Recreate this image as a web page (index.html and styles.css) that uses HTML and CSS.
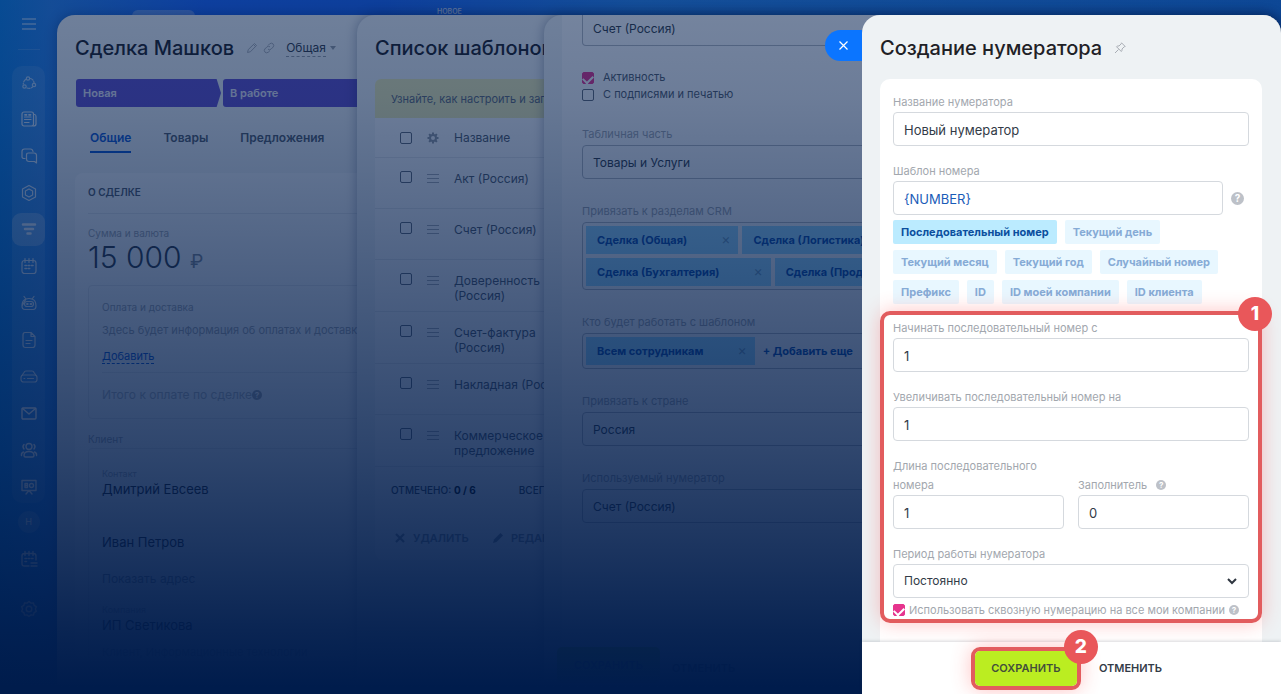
FILE: index.html
```
<!DOCTYPE html>
<html lang="ru">
	<head>
		<meta charset="utf-8">
		<title>Создание нумератора</title>
		<link rel="stylesheet" href="styles.css">
	</head>
	<body>
		<div class="screen">
			<nav class="sidebar">
				<button class="menu_toggle" aria-label="Меню"><svg width="14" height="12" viewBox="0 0 14 12"><path d="M0 1h14M0 6h14M0 11h14"/></svg></button>
				<div class="menu_group">
					<a href="#" class="menu_item dim" aria-label="Совместная работа"><svg viewBox="0 0 18 18"><circle cx="8" cy="4.500" r="1.700"/><circle cx="4.500" cy="12.500" r="1.700"/><circle cx="14" cy="11" r="1.700"/><path d="M5.500 5.500Q3.500 7 3.300 10M10.500 4.500Q13.500 5.500 14 8.500M7 14q3 1.200 5.500-1" stroke-dasharray="3 1.500"/></svg></a>
					<a href="#" class="menu_item" aria-label="Лента"><svg viewBox="0 0 18 18"><rect x="2" y="2" width="11.500" height="14" rx="2"/><path d="M14 4.500h.5q1.500 0 1.500 2V14q0 2-2.500 2M4.500 9.500h6.500M4.500 12.500h4.500M4.500 7h6.500"/><path d="M5 4.800h1.500M9 4.800h1.500" stroke-width="1.800"/></svg></a>
					<a href="#" class="menu_item" aria-label="Чаты"><svg viewBox="0 0 18 18"><path d="M5 11.500H3.200L2 10.300V4.500Q2 2 4.500 2h6q2 0 2.500 2.500"/><path d="M8.500 6h5.500q2.500 0 2.500 2.500v7.500l-2-1.500H9Q6.500 14.500 6.500 12V8Q6.500 6 8.500 6z"/></svg></a>
					<a href="#" class="menu_item" aria-label="Сайты"><svg viewBox="0 0 18 18"><path d="M9 1.500L15.500 5v8L9 16.500 2.500 13V5z"/><path d="M9 5l3.600 2v4L9 13l-3.600-2V7z"/></svg></a>
					<a href="#" class="menu_item active" aria-label="CRM"><svg viewBox="0 0 18 18"><path d="M3 4.500h12M5 9h8M7.500 13.500h3" stroke-width="2.500"/></svg></a>
					<a href="#" class="menu_item" aria-label="Календарь"><svg viewBox="0 0 18 18"><rect x="2" y="3.500" width="14" height="13" rx="2.500"/><path d="M5 1.500v4M9 1.500v4M13 1.500v4"/><path d="M5 8.500h1.500M8.200 8.500h1.500M11.500 8.500H13M5 11.500h1.500M8.200 11.500h1.500" stroke-width="1.600"/></svg></a>
					<a href="#" class="menu_item" aria-label="Роботы"><svg viewBox="0 0 18 18"><path d="M2 12Q2 6 6 5l-2-2.500M12 5l2-2.500M6 5q3-1 6 0 4 1 4 7 0 3.500-3 3.500H5Q2 15.500 2 12z"/><rect x="4.500" y="7.500" width="9" height="5" rx="2.500"/><path d="M7 10h.8M10.500 10h.8" stroke-width="1.800"/></svg></a>
					<a href="#" class="menu_item" aria-label="Документы"><svg viewBox="0 0 18 18"><path d="M5 1.500h6L15 5.500V14q0 2.500-2.500 2.500H5.500Q3 16.500 3 14V4Q3 1.500 5 1.500zM11 2v3.500h3.500M6 9.500h6M6 12.500h4"/></svg></a>
					<a href="#" class="menu_item" aria-label="Диск"><svg viewBox="0 0 18 18"><path d="M1.500 9L4 5.500Q4.500 4 6 4h6q1.500 0 2 1.500L16.500 9"/><rect x="1" y="8" width="16" height="7" rx="2.500"/><path d="M4 11.500h.8M7.500 11.500h6"/></svg></a>
					<a href="#" class="menu_item low" aria-label="Почта"><svg viewBox="0 0 18 18"><rect x="2" y="4" width="14" height="11" rx="1"/><path d="M2.500 4.500L9 10l6.500-5.500"/></svg></a>
					<a href="#" class="menu_item low" aria-label="Сотрудники"><svg viewBox="0 0 18 18"><circle cx="9" cy="5.500" r="3"/><path d="M4 14.500q0-4 5-4t5 4q0 1.500-1.500 1.500h-7Q4 16 4 14.500zM4 3.500Q2 5.500 4 8M14 3.500q2 2 0 4.500M3.500 11Q1 12 1.500 14.500M14.500 11q2.500 1 2 3.500"/></svg></a>
					<a href="#" class="menu_item low" aria-label="Доски"><svg viewBox="0 0 18 18"><path d="M2 2.500h14v10H2zM9 12.500L6 16M9 12.500l3 3.500M5 5.500h2.500v4H5zM5 7.500h2.500"/><circle cx="11.500" cy="7.500" r="2"/></svg></a>
				</div>
				<a href="#" class="menu_avatar">Н</a>
				<a href="#" class="menu_item low" aria-label="Планы"><svg viewBox="0 0 18 18"><path d="M9 16H4.500Q2 16 2 13.500V6q0-2.500 2.500-2.500h9Q16 3.500 16 6v4M5 1.500v4M9 1.500v4M13 1.500v4M11 13h6M11 16h6"/><path d="M5 8.500h1.500M8.200 8.500h1.500M11.500 8.500H13M5 11.500h1.500" stroke-width="1.600"/></svg></a>
				<a href="#" class="menu_item settings low" aria-label="Настройки"><svg viewBox="0 0 18 18"><circle cx="9" cy="9" r="2.800"/><path d="M9 1.500l2 1.600 2.500-.2.600 2.500 2.200 1.300L15.400 9l.9 2.300-2.200 1.300-.6 2.500-2.500-.2-2 1.600-2-1.600-2.500.2-.6-2.500-2.200-1.300L2.600 9l-.9-2.300 2.200-1.300.6-2.500 2.500.2z"/></svg></a>
			</nav>
			<div class="topbar">
				<span class="topbar_tab"></span>
				<span class="topbar_label">НОВОЕ</span>
			</div>

			<section class="slider slider_deal">
				<header class="slider_header">
					<h1>Сделка Машков</h1>
					<svg class="title_icon" viewBox="0 0 12 12"><path d="M1.500 10.500l.8-3L8.500 1.500l2 2L4.500 9.700zM7.500 2.500l2 2"/></svg>
					<svg class="title_icon" viewBox="0 0 12 12"><path d="M5 3.500L6.700 1.800q1.700-1.300 3.300 0 1.400 1.600.2 3.200L8 7.200Q6.500 8.200 5 7.200M7 8.500l-1.700 1.700q-1.700 1.300-3.300 0Q.6 8.600 1.800 7L4 4.800q1.500-1 3 0"/></svg>
					<a href="#" class="funnel">Общая</a>
					<span class="caret"></span>
				</header>
				<div class="stages">
					<div class="stage stage_first">Новая</div>
					<div class="stage">В работе</div>
				</div>
				<nav class="tabs">
					<a href="#" class="tab current">Общие</a>
					<a href="#" class="tab">Товары</a>
					<a href="#" class="tab">Предложения</a>
				</nav>
				<div class="deal_card">
					<h2>О СДЕЛКЕ</h2>
					<p class="caption">Сумма и валюта</p>
					<p class="amount">15 000 <span>₽</span></p>
					<div class="deal_box payment">
						<p class="caption">Оплата и доставка</p>
						<p class="note">Здесь будет информация об оплатах и доставках</p>
						<a href="#" class="add_link">Добавить</a>
						<p class="total">Итого к оплате по сделке<span class="help">?</span></p>
					</div>
					<p class="caption client_caption">Клиент</p>
					<div class="deal_box client">
						<p class="small_caption">Контакт</p>
						<p class="person">Дмитрий Евсеев</p>
						<p class="person second">Иван Петров</p>
						<p class="address">Показать адрес</p>
						<p class="small_caption">Компания</p>
						<p class="person">ИП Светикова</p>
						<p class="note">Клиент, Информационные технологии</p>
					</div>
				</div>
			</section>

			<section class="slider slider_list">
				<header class="slider_header">
					<h1>Список шаблонов</h1>
				</header>
				<div class="list_card">
					<p class="hint">Узнайте, как настроить и заполнить шаблон</p>
					<table class="templates">
						<thead>
							<tr>
								<th class="cell_check"><input type="checkbox" class="check" aria-label="Выбрать все"></th>
								<th class="cell_drag"><svg width="12" height="12" viewBox="0 0 12 12"><circle cx="6" cy="6" r="3" fill="none" stroke="#959ca4" stroke-width="2"/><path d="M6 .5v2M6 9.500v2M.5 6h2M9.500 6h2M2.100 2.100l1.400 1.400M8.500 8.500l1.400 1.400M9.900 2.100L8.500 3.500M3.500 8.500L2.100 9.900" stroke="#959ca4" stroke-width="2"/></svg></th>
								<th>Название</th>
							</tr>
						</thead>
						<tbody>
							<tr><td class="cell_check"><input type="checkbox" class="check" aria-label="Акт"></td><td class="cell_drag"><i class="drag"></i></td><td>Акт (Россия)</td></tr>
							<tr><td class="cell_check"><input type="checkbox" class="check" aria-label="Счет"></td><td class="cell_drag"><i class="drag"></i></td><td>Счет (Россия)</td></tr>
							<tr><td class="cell_check"><input type="checkbox" class="check" aria-label="Доверенность"></td><td class="cell_drag"><i class="drag"></i></td><td>Доверенность<br>(Россия)</td></tr>
							<tr><td class="cell_check"><input type="checkbox" class="check" aria-label="Счет-фактура"></td><td class="cell_drag"><i class="drag"></i></td><td>Счет-фактура<br>(Россия)</td></tr>
							<tr><td class="cell_check"><input type="checkbox" class="check" aria-label="Накладная"></td><td class="cell_drag"><i class="drag"></i></td><td>Накладная (Россия)</td></tr>
							<tr><td class="cell_check"><input type="checkbox" class="check" aria-label="Предложение"></td><td class="cell_drag"><i class="drag"></i></td><td>Коммерческое<br>предложение</td></tr>
						</tbody>
					</table>
					<div class="list_totals">
						<span>ОТМЕЧЕНО: <b>0 / 6</b></span>
						<span>ВСЕГО: <b>6</b></span>
					</div>
					<div class="list_actions">
						<button disabled><svg width="10" height="10" viewBox="0 0 10 10"><path d="M1 1l8 8M9 1L1 9" stroke="#828b95" stroke-width="2.200"/></svg>УДАЛИТЬ</button>
						<button disabled><svg width="10" height="10" viewBox="0 0 10 10"><path d="M0 10l1-3.500L7.500 0 10 2.500 3.500 9z" fill="#828b95"/></svg>РЕДАКТИРОВАТЬ</button>
					</div>
				</div>
			</section>

			<section class="slider slider_template">
				<div class="template_card">
					<input type="text" class="input cut_input" value="Счет (Россия)" aria-label="Название">
					<div class="template_checks">
						<label><input type="checkbox" class="check" checked>Активность</label>
						<label><input type="checkbox" class="check">С подписями и печатью</label>
					</div>
					<label class="template_label" for="products">Табличная часть</label>
					<input type="text" class="input" id="products" value="Товары и Услуги">
					<p class="template_label">Привязать к разделам CRM</p>
					<div class="picker">
						<span class="chip">Сделка (Общая)<button aria-label="Убрать">×</button></span>
						<span class="chip">Сделка (Логистика)<button aria-label="Убрать">×</button></span>
						<span class="chip">Сделка (Бухгалтерия)<button aria-label="Убрать">×</button></span>
						<span class="chip">Сделка (Продажи)<button aria-label="Убрать">×</button></span>
					</div>
					<p class="template_label">Кто будет работать с шаблоном</p>
					<div class="picker">
						<span class="chip">Всем сотрудникам<button aria-label="Убрать">×</button></span>
						<a href="#" class="chip_add">+ Добавить еще</a>
					</div>
					<label class="template_label" for="country">Привязать к стране</label>
					<input type="text" class="input" id="country" value="Россия">
					<label class="template_label" for="used_numerator">Используемый нумератор</label>
					<input type="text" class="input" id="used_numerator" value="Счет (Россия)">
				</div>
				<footer class="template_footer">
					<button class="save">СОХРАНИТЬ</button>
					<button class="cancel">ОТМЕНИТЬ</button>
				</footer>
			</section>

			<div class="shade"></div>

			<section class="slider slider_numerator">
				<button class="close" aria-label="Закрыть"><svg width="9" height="9" viewBox="0 0 9 9"><path d="M.5.5l8 8M8.500.5l-8 8" stroke="#fff" stroke-width="1.200"/></svg></button>
				<header class="slider_header">
					<h1>Создание нумератора</h1>
					<svg class="title_icon" viewBox="0 0 12 12"><path d="M7.500.8l3.700 3.700-1 .3-2.200 2.200q.3 1.500-.7 2.500L2.500 4.700q1-1 2.500-.7l2.200-2.200zM4.500 7.500L1 11"/></svg>
				</header>
				<form class="numerator_scroll">
					<div class="numerator_card">
						<div class="field">
							<label for="name">Название нумератора</label>
							<input type="text" class="input" id="name" value="Новый нумератор">
						</div>
						<div class="field">
							<label for="template">Шаблон номера</label>
							<div class="with_help">
								<input type="text" class="input code" id="template" value="{NUMBER}">
								<span class="help big">?</span>
							</div>
						</div>
						<div class="tokens">
							<button type="button" class="token selected">Последовательный номер</button>
							<button type="button" class="token">Текущий день</button>
							<button type="button" class="token">Текущий месяц</button>
							<button type="button" class="token">Текущий год</button>
							<button type="button" class="token">Случайный номер</button>
							<button type="button" class="token">Префикс</button>
							<button type="button" class="token">ID</button>
							<button type="button" class="token">ID моей компании</button>
							<button type="button" class="token">ID клиента</button>
						</div>
						<div class="marked settings_block">
							<span class="badge">1</span>
							<div class="field">
								<label for="start">Начинать последовательный номер с</label>
								<input type="text" class="input" id="start" value="1">
							</div>
							<div class="field">
								<label for="step">Увеличивать последовательный номер на</label>
								<input type="text" class="input" id="step" value="1">
							</div>
							<div class="field_row">
								<div class="field">
									<label for="length">Длина последовательного номера</label>
									<input type="text" class="input" id="length" value="1">
								</div>
								<div class="field">
									<label for="filler">Заполнитель <span class="help">?</span></label>
									<input type="text" class="input" id="filler" value="0">
								</div>
							</div>
							<div class="field">
								<label for="period">Период работы нумератора</label>
								<div class="select">
									<select class="input" id="period"><option>Постоянно</option></select>
									<svg width="10" height="7" viewBox="0 0 10 7"><path d="M1 1l4 4 4-4" fill="none" stroke="#2f3640" stroke-width="2"/></svg>
								</div>
							</div>
							<div class="through">
								<input type="checkbox" class="check" id="through" checked>
								<label for="through">Использовать сквозную нумерацию на все мои компании</label>
								<span class="help">?</span>
							</div>
						</div>
					</div>
				</form>
				<footer class="numerator_footer">
					<div class="marked save_block">
						<button class="save">СОХРАНИТЬ</button>
						<span class="badge">2</span>
					</div>
					<button class="cancel">ОТМЕНИТЬ</button>
				</footer>
			</section>
		</div>
	</body>
</html>
```
FILE: styles.css
```
* {
	box-sizing: border-box;
}
html, body {
	height: 100%;
	margin: 0;
}
body, button, input, select {
	font-family: Inter, "Noto Sans", sans-serif;
	font-size: 12px;
	color: #333b47;
}
p, h1, h2 {
	margin: 0;
}
button {
	border: 0;
	padding: 0;
	background: none;
}
a {
	color: inherit;
	text-decoration: none;
}
.screen {
	position: relative;
	height: 100%;
	overflow: hidden;
	background: linear-gradient(to right, #0f80e4 0, #2a82ea 4%, #1c66fa 16%, #1c66f4 30%, #2a86ee 50%, #1c78e8 100%);
}

/* left menu */
.sidebar {
	display: flex;
	flex-direction: column;
	align-items: center;
	width: 57px;
	height: 100%;
	padding-top: 12px;
}
.sidebar svg {
	fill: none;
	stroke: #fff;
	stroke-width: 1.2;
	stroke-linecap: round;
	stroke-linejoin: round;
	opacity: 0.8;
}
.menu_toggle {
	height: 38px;
	width: 22px;
	margin-bottom: 16px;
	padding-bottom: 14px;
	border-bottom: 1px solid rgba(255, 255, 255, 0.15);
}
.menu_toggle svg {
	display: block;
	margin: 0 auto;
}
.menu_group {
	display: flex;
	flex-direction: column;
	justify-content: space-between;
	height: 63vh;
	border-radius: 10px;
	background: rgba(255, 255, 255, 0.1);
}
.menu_item {
	display: flex;
	align-items: center;
	justify-content: center;
	width: 33px;
	height: 33px;
	border-radius: 9px;
}
.menu_item svg {
	width: 18px;
	height: 18px;
}
.menu_item.active {
	background: rgba(255, 255, 255, 0.25);
}
.menu_item.dim svg {
	opacity: 0.6;
}
.menu_item.low svg {
	opacity: 1;
	stroke-width: 1.4;
}
.menu_avatar {
	width: 22px;
	height: 22px;
	margin: 8px 0 9px;
	border-radius: 50%;
	background: rgba(255, 255, 255, 0.2);
	font-size: 9px;
	line-height: 22px;
	text-align: center;
	color: #fff;
}
.menu_item.settings {
	margin-top: 17px;
}
.topbar {
	position: absolute;
	top: 0;
	left: 132px;
	right: 0;
	display: flex;
	gap: 242px;
}
.topbar_tab {
	width: 63px;
	height: 20px;
	margin-top: 10px;
	border-radius: 6px;
	background: rgba(255, 255, 255, 0.3);
}
.topbar_label {
	margin-top: 7px;
	font-size: 7px;
	line-height: 10px;
	font-weight: 600;
	color: #c8d8f4;
}

/* stacked side panels */
.slider {
	position: absolute;
	top: 15px;
	right: 0;
	bottom: 0;
	overflow: hidden;
	border-radius: 18px 18px 0 0;
	background: #eef2f4;
	box-shadow: 0 0 12px rgba(0, 20, 60, 0.35);
}
.slider_deal {
	left: 57px;
	padding: 0 18px;
}
.slider_list {
	left: 357px;
	padding: 0 18px;
}
.slider_template {
	left: 544px;
	padding: 0 18px;
}
.slider_numerator {
	left: 862px;
	display: flex;
	flex-direction: column;
	overflow: visible;
	box-shadow: none;
}
.shade {
	position: absolute;
	inset: 0;
	pointer-events: none;
	background: linear-gradient(to bottom, rgba(0, 28, 76, 0.53) 0, rgba(0, 28, 76, 0.57) 14%, rgba(0, 28, 76, 0.66) 33%, rgba(0, 28, 76, 0.81) 65%, rgba(0, 28, 76, 0.89) 79%, rgba(0, 28, 76, 0.96) 91%, rgb(0, 28, 76) 99%);
}
.slider_header {
	display: flex;
	align-items: center;
	flex-shrink: 0;
	height: 64px;
	padding-top: 2px;
}
h1 {
	font-size: 20px;
	line-height: 28px;
	font-weight: 500;
	white-space: nowrap;
	color: #1f2126;
}
.title_icon {
	width: 12px;
	height: 12px;
	margin-left: 8px;
	fill: none;
	stroke: #a8adb4;
}

/* deal */
.slider_deal .title_icon + .title_icon {
	margin-left: 5px;
}
.slider_deal .title_icon:nth-child(2) {
	margin-left: 12px;
}
.funnel {
	margin-left: 11px;
	border-bottom: 1px dashed #959ca4;
	font-size: 12px;
	line-height: 16px;
}
.caret {
	margin-left: 4px;
	border: 3px solid transparent;
	border-top: 4px solid #959ca4;
	border-bottom: 0;
}
.stages {
	display: flex;
	gap: 2px;
	padding-left: 1px;
}
.stage {
	width: 145px;
	height: 28px;
	padding-left: 7px;
	border-radius: 3px;
	background: #6350cc;
	font-size: 11px;
	line-height: 28px;
	font-weight: 600;
	color: #e6e6f4;
}
.stage_first {
	clip-path: polygon(0 0, 97% 0, 100% 50%, 97% 100%, 0 100%);
}
.stage:last-child {
	flex: 1;
}
.tabs {
	display: flex;
	gap: 32px;
	margin: 18px 0 20px;
	padding-left: 15px;
}
.tab {
	height: 28px;
	font-size: 12px;
	line-height: 26px;
	font-weight: 600;
	color: #525c69;
}
.tab.current {
	border-bottom: 2px solid #1058d0;
	color: #1058d0;
}
.deal_card {
	padding: 0 13px;
	border-radius: 8px;
	background: #f8fafb;
}
h2 {
	height: 41px;
	margin-bottom: 10px;
	border-bottom: 1px solid #e4e7ea;
	font-size: 10px;
	line-height: 39px;
	font-weight: 600;
	color: #525c69;
}
.caption {
	font-size: 10px;
	line-height: 18px;
	color: #a2a7ae;
}
.amount {
	margin-bottom: 8px;
	font-size: 30px;
	line-height: 31px;
	font-weight: 300;
}
.amount span {
	font-size: 19px;
	font-weight: 400;
	color: #828b95;
}
.deal_box {
	border: 1px solid #e4e7ea;
	border-radius: 4px;
	padding: 12px 13px 0;
}
.payment {
	height: 134px;
}
.note {
	font-size: 11px;
	line-height: 18px;
	white-space: nowrap;
	color: #a2a7ae;
}
.payment .note {
	margin: 5px 0 9px;
}
.add_link {
	border-bottom: 1px dashed #1058d0;
	font-size: 11px;
	color: #1058d0;
}
.total {
	margin-top: 9px;
	padding-top: 13px;
	border-top: 1px solid #e4e7ea;
	font-size: 12px;
	line-height: 18px;
	color: #b4b9c0;
}
.total .help {
	background: #a2a7ae;
}
.client_caption {
	margin-top: 11px;
}
.client {
	padding-top: 18px;
}
.small_caption {
	font-size: 9px;
	line-height: 14px;
	color: #a8adb4;
}
.person {
	font-size: 13px;
	line-height: 16px;
	color: #1f2126;
}
.person.second {
	margin: 37px 0 20px;
}
.address {
	margin-bottom: 15px;
	font-size: 12px;
	line-height: 18px;
	color: #828b95;
}
.client .note {
	margin-top: 10px;
}

/* template list */
.list_card {
	border-radius: 8px;
	background: #fafbfc;
}
.hint {
	height: 39px;
	padding-left: 16px;
	border-radius: 6px 0 0 0;
	background: #f0eeb4;
	font-size: 11px;
	line-height: 40px;
	white-space: nowrap;
	color: #626b77;
}
.templates {
	width: 100%;
	border-collapse: collapse;
}
.templates th, .templates td {
	padding: 13px 0 8px;
	border-bottom: 1px solid #e4e7ea;
	font-size: 12px;
	line-height: 15px;
	font-weight: 400;
	text-align: left;
	vertical-align: top;
	color: #525c69;
}
.templates th {
	padding: 12px 0;
	vertical-align: middle;
}
.templates th svg {
	display: block;
}
.templates tbody tr {
	height: 51px;
}
.templates .cell_check {
	width: 52px;
	padding-left: 25px;
}
.templates .cell_drag {
	width: 27px;
}
.drag {
	display: block;
	width: 12px;
	height: 9px;
	margin-top: 3px;
	border: solid #a8adb4;
	border-width: 1px 0;
	background: linear-gradient(#a8adb4, #a8adb4) center / 100% 1px no-repeat;
}
.check {
	appearance: none;
	display: block;
	flex-shrink: 0;
	width: 12px;
	height: 12px;
	margin: 0;
	border: 1px solid #626b77;
	border-radius: 2px;
}
.check:checked {
	display: grid;
	justify-content: center;
	align-content: start;
	padding-top: 2px;
	border-color: #e6348d;
	background: #e6348d;
}
.check:checked::before {
	content: "";
	width: 8px;
	height: 5px;
	border-left: 2px solid #fff;
	border-bottom: 2px solid #fff;
	transform: rotate(-45deg);
}
.list_totals {
	display: flex;
	gap: 43px;
	padding: 15px 16px 20px;
	font-size: 10px;
	line-height: 16px;
	font-weight: 500;
	white-space: nowrap;
}
.list_totals b {
	color: #000;
}
.list_actions {
	display: flex;
	gap: 24px;
	padding: 12px 20px 14px;
}
.list_actions button {
	display: flex;
	align-items: center;
	gap: 8px;
	font-size: 11px;
	line-height: 16px;
	font-weight: 600;
	color: #828b95;
}

/* template settings */
.template_card {
	height: 100%;
	padding-left: 20px;
	background: #fafbfc;
}
.input {
	display: block;
	width: 100%;
	height: 34px;
	margin: 0;
	padding: 2px 10px 0;
	border: 1px solid #d5d9de;
	border-radius: 4px;
	background: #fff;
	font-size: 13px;
	color: #333b47;
}
.template_card .input {
	padding-top: 0;
	border-color: #b4b9c0;
	background: none;
	font-size: 12px;
}
.template_card .cut_input {
	height: 31px;
	padding-bottom: 4px;
	border-top: 0;
	border-radius: 0 0 4px 4px;
}
.template_checks {
	display: flex;
	flex-direction: column;
	gap: 2px;
	margin: 24px 0 22px;
}
.template_checks label {
	display: flex;
	align-items: center;
	gap: 9px;
	font-size: 11px;
	line-height: 15px;
	color: #525c69;
}
.template_label {
	display: block;
	padding-top: 22px;
	font-size: 11px;
	line-height: 21px;
	color: #a2a7ae;
}
.template_checks + .template_label {
	padding-top: 0;
}
.picker {
	display: flex;
	flex-wrap: wrap;
	gap: 4px;
	width: 385px;
	padding: 3px;
	border: 1px solid #b4b9c0;
	border-radius: 4px;
}
.chip {
	display: flex;
	align-items: center;
	height: 28px;
	padding: 0 8px 0 11px;
	background: #9cdcff;
	font-size: 11px;
	font-weight: 700;
	color: #0b4fae;
}
.chip button {
	margin-left: 34px;
	padding-bottom: 2px;
	font-size: 14px;
	line-height: 14px;
	font-weight: 400;
	color: #6b9cc0;
}
.chip_add {
	padding-left: 4px;
	font-size: 11px;
	line-height: 28px;
	font-weight: 700;
	color: #0b4fae;
}
.template_footer {
	position: absolute;
	left: 0;
	right: 0;
	bottom: 0;
	display: flex;
	gap: 12px;
	height: 52px;
	padding: 5px 13px;
	background: #fff;
}
.template_footer .save {
	width: 103px;
	height: 36px;
}

/* numerator form */
.close {
	position: absolute;
	top: 15px;
	right: 100%;
	width: 37px;
	height: 31px;
	border-radius: 16px 0 0 16px;
	background: #0b75ff;
}
.slider_numerator .slider_header {
	padding: 2px 18px 0;
}
.slider_numerator .title_icon {
	margin-left: 12px;
}
.numerator_scroll {
	flex: 1;
	min-height: 0;
	overflow: hidden;
	padding: 0 19px 0 18px;
}
.numerator_card {
	padding: 14px 13px 40px;
	border-radius: 10px;
	background: #fff;
}
.field label {
	display: block;
	font-size: 11px;
	line-height: 19px;
	color: #a2a7ae;
}
.field + .field {
	margin-top: 16px;
}
.with_help {
	display: flex;
	align-items: center;
	gap: 8px;
	margin-right: 5px;
}
.input.code {
	color: #1a5cb8;
}
.help {
	display: inline-block;
	width: 10px;
	height: 10px;
	flex-shrink: 0;
	border-radius: 50%;
	background: #bdc1c8;
	font-size: 8px;
	line-height: 10px;
	font-weight: 700;
	text-align: center;
	vertical-align: 1px;
	color: #fff;
}
.help.big {
	width: 13px;
	height: 13px;
	font-size: 10px;
	line-height: 13px;
}
.field label .help {
	margin-left: 6px;
}
.tokens {
	display: flex;
	flex-wrap: wrap;
	gap: 6px 8px;
	margin-top: 5px;
}
.token {
	height: 24px;
	padding: 0 8px;
	border-radius: 2px;
	background: #e8f7ff;
	font-size: 11px;
	font-weight: 700;
	white-space: nowrap;
	color: #86abd6;
}
.token.selected {
	background: #bbebff;
	color: #0b4f9e;
}
.marked {
	position: relative;
	border: 4px solid #e25c5e;
	box-shadow: 0 0 20px rgba(255, 60, 60, 0.3);
}
.settings_block {
	margin: 7px -13px 0;
	padding: 4px 9px 0;
	border-radius: 10px;
}
.badge {
	position: absolute;
	z-index: 1;
	top: -18px;
	right: -14px;
	width: 34px;
	height: 34px;
	border-radius: 50%;
	background: #e9575a;
	font-size: 19px;
	line-height: 34px;
	font-weight: 800;
	text-align: center;
	color: #fff;
}
.save_block .badge {
	top: -21px;
	right: -21px;
}
.field_row {
	display: grid;
	grid-template-columns: 1fr 1fr;
	align-items: end;
	gap: 14px;
	margin: 16px 0;
}
.field_row .field + .field {
	margin-top: 0;
}
.select {
	position: relative;
}
.select select {
	appearance: none;
	padding-top: 0;
	padding-bottom: 2px;
	font-size: 12px;
}
.select svg {
	position: absolute;
	top: 14px;
	right: 12px;
	pointer-events: none;
}
.through {
	display: flex;
	align-items: center;
	gap: 4px;
	height: 21px;
	padding-top: 2px;
	font-size: 11px;
	white-space: nowrap;
	color: #a2a7ae;
}
.numerator_footer {
	position: relative;
	display: flex;
	flex-shrink: 0;
	align-items: center;
	justify-content: center;
	gap: 18px;
	height: 52px;
	padding-right: 10px;
	background: #fff;
	box-shadow: 0 -1px 3px rgba(60, 70, 80, 0.2);
}
.save_block {
	border-radius: 9px;
}
.save {
	display: block;
	width: 102px;
	height: 35px;
	border-radius: 5px;
	background: #bbed21;
	font-size: 11px;
	font-weight: 600;
	color: #434d3b;
}
.cancel {
	font-size: 11px;
	font-weight: 600;
	color: #333b47;
}
```
